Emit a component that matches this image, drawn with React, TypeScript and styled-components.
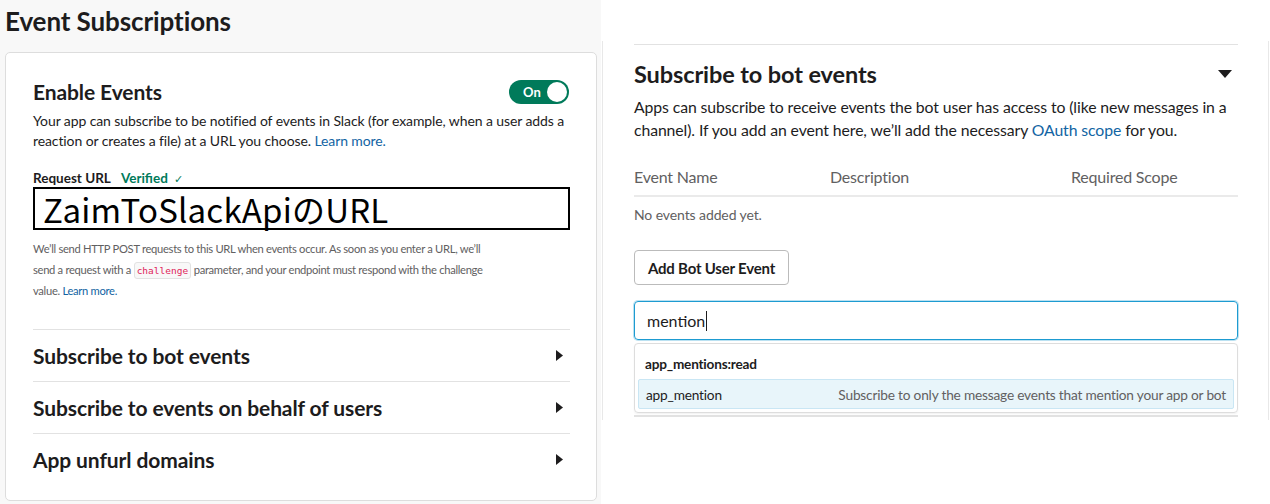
import React from "react";
import styled, { createGlobalStyle } from "styled-components";

const Global = createGlobalStyle`
  html, body { margin: 0; padding: 0; background: #ffffff; }
  body { font-family: Lato, "Noto Sans", "Liberation Sans", sans-serif; color: #1d1c1d; }
  * { box-sizing: border-box; }
`;

const Page = styled.div`
  display: flex;
  width: 1270px;
  height: 504px;
  overflow: hidden;
  background: #ffffff;
`;

const LeftPane = styled.div`
  width: 601px;
  flex: none;
  background: #f8f8f8;
  padding: 0 4px 3px 5px;
  display: flex;
  flex-direction: column;
`;

const PageTitle = styled.h1`
  margin: 0;
  height: 52px;
  padding-top: 4px;
  font-size: 26px;
  line-height: 34px;
  font-weight: 700;
  letter-spacing: -0.1px;
  color: #1d1c1d;
`;

const Card = styled.div`
  flex: 1;
  background: #ffffff;
  border: 1px solid #dddddd;
  border-radius: 5px;
  padding: 23px 26px 0 27px;
  display: flex;
  flex-direction: column;
`;

const HeadRow = styled.div`
  display: flex;
  justify-content: space-between;
  align-items: center;
  height: 30px;
`;

const SectionTitle = styled.h2<{ $size?: number }>`
  margin: 0;
  font-size: ${(p) => p.$size ?? 21}px;
  font-weight: 700;
  letter-spacing: -0.1px;
  color: #1d1c1d;
`;

const Toggle = styled.div`
  width: 60px;
  height: 24px;
  margin-right: 1px;
  margin-top: 2px;
  border-radius: 12px;
  background: #007a5a;
  display: flex;
  align-items: center;
  justify-content: space-between;
  padding: 0 2px 0 14px;
  color: #fff;
  font-size: 13px;
  font-weight: 700;
`;

const Knob = styled.span`
  width: 20px;
  height: 20px;
  border-radius: 50%;
  background: #fff;
`;

const Desc = styled.p<{ $size?: number; $lh?: number; $mt?: number }>`
  margin: ${(p) => p.$mt ?? 0}px 0 0;
  font-size: ${(p) => p.$size ?? 14}px;
  line-height: ${(p) => p.$lh ?? 20}px;
  color: #1d1c1d;
  letter-spacing: -0.1px;
`;

const Link = styled.a`
  color: #1264a3;
  text-decoration: none;
`;

const Label = styled.div`
  margin-top: 19px;
  font-size: 13.5px;
  line-height: 16px;
  font-weight: 700;
  display: flex;
  align-items: baseline;
  gap: 10px;
`;

const Verified = styled.span`
  color: #007a5a;
`;

const Check = styled.span`
  color: #007a5a;
  font-weight: 400;
  font-size: 11px;
  margin-left: 6px;
`;

const UrlBox = styled.div`
  margin-top: 0;
  height: 43px;
  border: 2px solid #000;
  padding-left: 8px;
  display: flex;
  align-items: center;
  font-family: "Noto Sans CJK JP", "Noto Sans", sans-serif;
  font-weight: 400;
  font-size: 33px;
  color: #000;
  letter-spacing: 0.2px;
`;

const Help = styled.p`
  margin: 8px 0 0;
  font-size: 11.2px;
  line-height: 21px;
  color: #616061;
  letter-spacing: -0.3px;
  white-space: nowrap;
`;

const Code = styled.code`
  display: inline-block;
  font-family: "DejaVu Sans Mono", "Liberation Mono", monospace;
  font-size: 9.5px;
  line-height: 15px;
  vertical-align: 0;
  letter-spacing: 0;
  color: #e01e5a;
  background: #f8f8f8;
  border: 1px solid #e2e2e2;
  border-radius: 3px;
  padding: 0 2px;
`;

const Rows = styled.div`
  margin-top: 28px;
  display: flex;
  flex-direction: column;
`;

const Row = styled.div`
  height: 52px;
  border-top: 1px solid #e2e2e2;
  display: flex;
  align-items: center;
  justify-content: space-between;
  padding-right: 7px;
`;

const Caret = ({ dir }: { dir: "right" | "down" }) =>
  dir === "right" ? (
    <svg width="7" height="11" viewBox="0 0 7 11">
      <path d="M0 0 L7 5.5 L0 11 Z" fill="#1d1c1d" />
    </svg>
  ) : (
    <svg width="14" height="8" viewBox="0 0 14 8">
      <path d="M0 0 L14 0 L7 8 Z" fill="#1d1c1d" />
    </svg>
  );

const RightPane = styled.div`
  flex: 1;
  display: flex;
  flex-direction: column;
  padding-top: 41px;
`;

const RightCard = styled.div`
  height: 379px;
  border-left: 1px solid #e8e8e8;
  border-right: 1px solid #e8e8e8;
  margin-left: 1px;
  margin-right: 1px;
  padding: 3px 30px 0 31px;
  display: flex;
  flex-direction: column;
`;

const TopRule = styled.div`
  border-top: 1px solid #e2e2e2;
`;

const RightHead = styled.div`
  display: flex;
  justify-content: space-between;
  align-items: center;
  margin-top: 14px;
  height: 30px;
  padding-right: 6px;
`;

const TableHead = styled.div`
  margin-top: 23px;
  display: grid;
  grid-template-columns: 196px 241px 1fr;
  height: 33px;
  align-items: center;
  border-bottom: 2px solid #eaeaea;
  font-size: 16px;
  color: #616061;
  letter-spacing: -0.2px;
  padding-bottom: 7px;
`;

const Empty = styled.div`
  margin-top: 8px;
  font-size: 14px;
  color: #616061;
  letter-spacing: -0.1px;
  line-height: 20px;
`;

const Button = styled.button`
  margin-top: 25px;
  align-self: flex-start;
  height: 35px;
  width: 155px;
  border: 1px solid #bbbbbb;
  border-radius: 4px;
  background: #fff;
  font-family: Lato, "Noto Sans", sans-serif;
  font-size: 15px;
  font-weight: 700;
  color: #1d1c1d;
  letter-spacing: -0.2px;
  padding: 0;
`;

const Input = styled.div`
  margin-top: 16px;
  height: 39px;
  border: 1px solid #1d9bd1;
  border-radius: 4px;
  box-shadow: 0 0 0 1px rgba(29, 155, 209, 0.3);
  display: flex;
  align-items: center;
  padding-left: 12px;
  font-size: 16px;
  color: #1d1c1d;
`;

const Cursor = styled.span`
  display: inline-block;
  width: 1px;
  height: 20px;
  background: #1d1c1d;
  margin-left: 1px;
`;

const Dropdown = styled.div`
  margin-top: 3px;
  border: 1px solid #dddddd;
  border-radius: 4px;
  padding: 10px 3px 3px 3px;
  box-shadow: 0 1px 2px rgba(0, 0, 0, 0.06);
`;

const GroupLabel = styled.div`
  font-size: 13.6px;
  font-weight: 700;
  padding-left: 7px;
  height: 20px;
  line-height: 20px;
  color: #1d1c1d;
  letter-spacing: -0.2px;
`;

const Option = styled.div`
  margin-top: 5px;
  height: 30px;
  background: #e8f5fa;
  border: 1px solid #c9e6f4;
  border-radius: 2px;
  display: flex;
  align-items: center;
  justify-content: space-between;
  padding: 0 7px 0 7px;
  font-size: 13.7px;
  letter-spacing: -0.2px;
`;

const OptionDesc = styled.span`
  color: #616061;
`;

const BottomRule = styled.div`
  margin-top: 2px;
  border-top: 2px solid #e2e2e2;
`;

export default function App() {
  return (
    <Page>
      <Global />
      <LeftPane>
        <PageTitle>Event Subscriptions</PageTitle>
        <Card>
          <HeadRow>
            <SectionTitle>Enable Events</SectionTitle>
            <Toggle>
              On
              <Knob />
            </Toggle>
          </HeadRow>
          <Desc $mt={5}>
            Your app can subscribe to be notified of events in Slack (for example, when a user adds a
            reaction or creates a file) at a URL you choose. <Link>Learn more.</Link>
          </Desc>
          <Label>
            Request URL
            <Verified>
              Verified<Check>✓</Check>
            </Verified>
          </Label>
          <UrlBox>ZaimToSlackApiのURL</UrlBox>
          <Help>
            We’ll send HTTP POST requests to this URL when events occur. As soon as you enter a URL, we’ll
            <br />
            send a request with a <Code>challenge</Code> parameter, and your endpoint must respond with the challenge
            <br />
            value. <Link>Learn more.</Link>
          </Help>
          <Rows>
            <Row>
              <SectionTitle>Subscribe to bot events</SectionTitle>
              <Caret dir="right" />
            </Row>
            <Row>
              <SectionTitle>Subscribe to events on behalf of users</SectionTitle>
              <Caret dir="right" />
            </Row>
            <Row>
              <SectionTitle>App unfurl domains</SectionTitle>
              <Caret dir="right" />
            </Row>
          </Rows>
        </Card>
      </LeftPane>
      <RightPane>
        <RightCard>
          <TopRule />
          <RightHead>
            <SectionTitle $size={23.5}>Subscribe to bot events</SectionTitle>
            <Caret dir="down" />
          </RightHead>
          <Desc $size={15.8} $lh={23} $mt={6}>
            Apps can subscribe to receive events the bot user has access to (like new messages in a
            channel). If you add an event here, we’ll add the necessary <Link>OAuth scope</Link> for you.
          </Desc>
          <TableHead>
            <span>Event Name</span>
            <span>Description</span>
            <span>Required Scope</span>
          </TableHead>
          <Empty>No events added yet.</Empty>
          <Button>Add Bot User Event</Button>
          <Input>
            mention
            <Cursor />
          </Input>
          <Dropdown>
            <GroupLabel>app_mentions:read</GroupLabel>
            <Option>
              <span>app_mention</span>
              <OptionDesc>Subscribe to only the message events that mention your app or bot</OptionDesc>
            </Option>
          </Dropdown>
          <BottomRule />
        </RightCard>
      </RightPane>
    </Page>
  );
}
